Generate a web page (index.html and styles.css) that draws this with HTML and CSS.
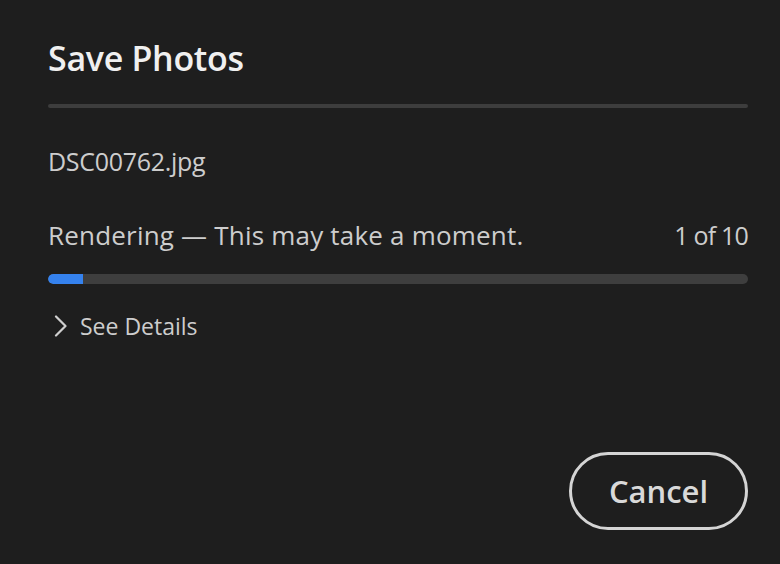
FILE: index.html
```html
<!DOCTYPE html>
<html>
<head>
<meta charset="utf-8">
<link rel="stylesheet" href="styles.css">
</head>
<body>
<div class="dialog">
  <h1 class="title">Save Photos</h1>
  <div class="divider"></div>
  <div class="filename">DSC00762.jpg</div>
  <div class="status">
    <span class="label">Rendering — This may take a moment.</span>
    <span class="count">1 of 10</span>
  </div>
  <div class="track"><div class="fill" style="width:5%"></div></div>
  <div class="details">
    <svg class="chev" width="14" height="22" viewBox="0 0 14 22"><path d="M2 1.5 L11.5 11 L2 20.5" fill="none" stroke="#cfcfcf" stroke-width="2.2" stroke-linecap="round" stroke-linejoin="round"/></svg>
    <span>See Details</span>
  </div>
  <div class="spacer"></div>
  <div class="footer">
    <button class="cancel">Cancel</button>
  </div>
</div>
</body>
</html>
```
FILE: styles.css
```css
html, body {
  margin: 0;
  height: 100%;
  background: #1e1e1e;
}
.dialog {
  box-sizing: border-box;
  height: 564px;
  padding: 36px 32px 34px 48px;
  display: flex;
  flex-direction: column;
  font-family: "Open Sans", sans-serif;
  color: #cdcdcd;
}
.title {
  margin: 0;
  font-size: 34px;
  line-height: 44px;
  font-weight: 600;
  color: #f0f0f0;
  letter-spacing: -0.3px;
}
.divider {
  margin-top: 24px;
  height: 4px;
  border-radius: 2px;
  background: #3d3d3d;
}
.filename {
  margin-top: 36px;
  font-size: 25px;
  line-height: 34px;
  letter-spacing: -0.3px;
}
.status {
  margin-top: 40px;
  display: flex;
  justify-content: space-between;
  align-items: baseline;
  line-height: 34px;
}
.label {
  font-size: 26px;
  letter-spacing: 0.2px;
}
.count {
  font-size: 25px;
  letter-spacing: -0.8px;
}
.track {
  margin-top: 22px;
  height: 10px;
  border-radius: 5px;
  background: #3e3e3e;
  overflow: hidden;
}
.fill {
  height: 100%;
  background: #3582ee;
  border-radius: 5px 0 0 5px;
}
.details {
  margin-top: 27px;
  display: flex;
  align-items: center;
  gap: 12px;
  font-size: 23px;
  line-height: 30px;
}
.chev {
  margin-left: 6px;
}
.spacer {
  flex: 1;
}
.footer {
  display: flex;
  justify-content: flex-end;
}
.cancel {
  box-sizing: border-box;
  width: 179px;
  height: 78px;
  border: 3.5px solid #d4d4d4;
  border-radius: 39px;
  background: transparent;
  color: #d9d9d9;
  font-family: "Open Sans", sans-serif;
  font-weight: 600;
  font-size: 31px;
  padding: 0;
}
```
